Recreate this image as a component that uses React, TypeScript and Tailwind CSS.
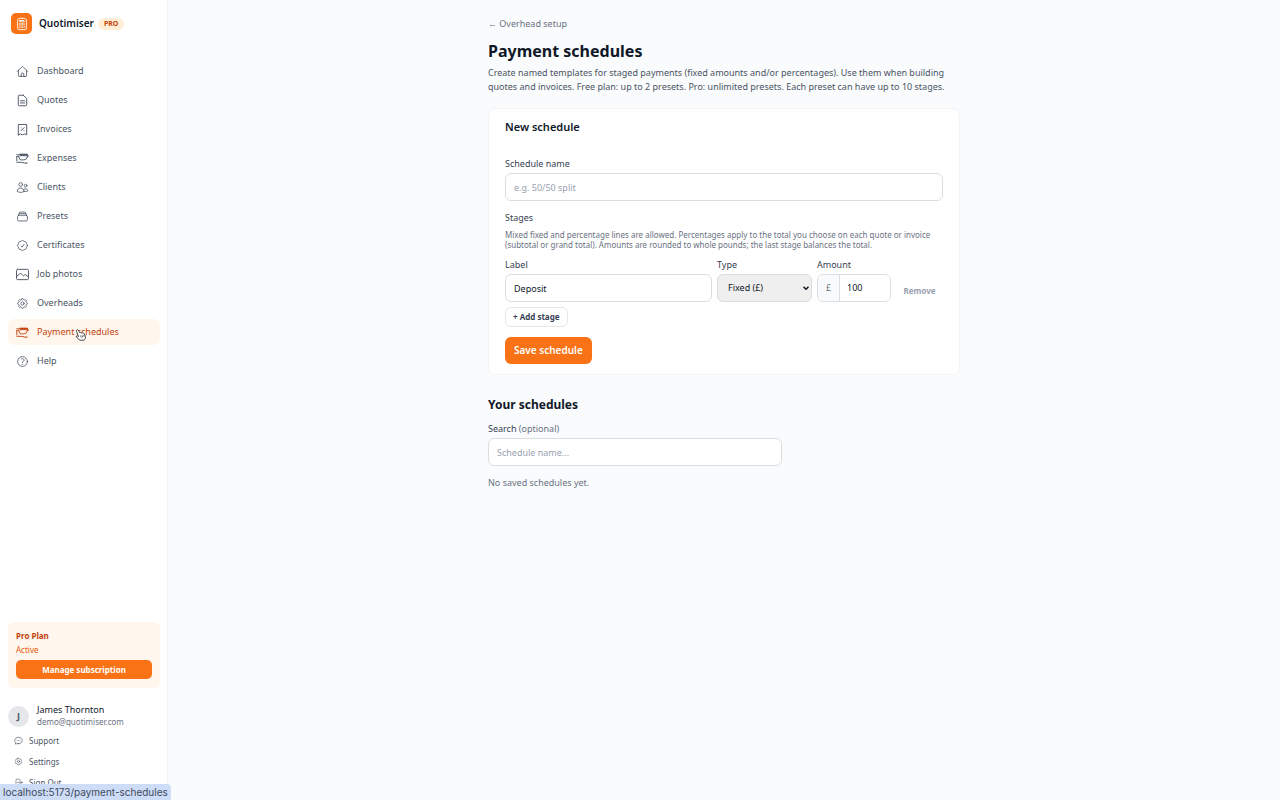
import { useState } from "react";
import type { ReactNode } from "react";
import clsx from "clsx";
import {
  HiOutlineArrowRightOnRectangle,
  HiOutlineCalculator,
  HiOutlineCheckBadge,
  HiOutlineCog6Tooth,
  HiOutlineCog8Tooth,
  HiOutlineHome,
  HiOutlineQuestionMarkCircle,
  HiOutlineRectangleStack,
  HiOutlineUsers,
} from "react-icons/hi2";

function Svg({ children }: { children: ReactNode }) {
  return (
    <svg
      viewBox="0 0 24 24"
      fill="none"
      stroke="currentColor"
      strokeWidth={1.75}
      strokeLinecap="round"
      strokeLinejoin="round"
      className="size-full"
      aria-hidden="true"
    >
      {children}
    </svg>
  );
}

function DocumentIcon() {
  return (
    <Svg>
      <path d="M13.5 2.25H6A1.75 1.75 0 0 0 4.25 4v16c0 .97.78 1.75 1.75 1.75h12A1.75 1.75 0 0 0 19.75 20V8.5l-6.25-6.25ZM8.25 12.5h7.5M8.25 16.5h7.5" />
    </Svg>
  );
}

function ReceiptIcon() {
  return (
    <Svg>
      <path d="M4.25 21.75v-19h15.5v19l-3.9-1.5-3.85 1.5-3.85-1.5-3.9 1.5ZM9 14.5l6-6" />
      <path d="M9.25 9h.01M14.75 14h.01" />
    </Svg>
  );
}

function WalletIcon() {
  return (
    <Svg>
      <path d="M1.5 5c2.500.5 4-.5 6-1h13.500l1 3.500" />
      <path d="M8.500 5H20.500" strokeWidth={3} />
      <path d="M1.500 8.250c7-2 13-2 20.500-.75M1.500 8.250v8" />
      <path d="m5 9 2.500 5.250c4 .75 8 .5 11.500-1.250L22 7.500" />
      <path d="M1.500 19c6-.25 11.500.25 18.500 2.250v-1.500" />
    </Svg>
  );
}

function PhotoIcon() {
  return (
    <Svg>
      <rect x="1" y="2.5" width="22" height="19" rx="2" />
      <path d="m1.5 15.750 5-5a2.250 2.250 0 0 1 3.100 0l3.900 3.700 1.750-1.500a2.250 2.250 0 0 1 3.100 0l4.150 3.300" />
    </Svg>
  );
}

function ChatIcon() {
  return (
    <Svg>
      <path d="M12 20.500c5.500 0 10-3.800 10-8.500s-4.500-8.500-10-8.500S2 7.300 2 12c0 2.400 1.100 4.500 3 6.100l-1.500 3.400c2 0 3.500-.7 4.800-1.600 1.200.4 2.400.6 3.700.6ZM8 12h.01M12 12h.01M16 12h.01" />
    </Svg>
  );
}

const navItems = [
  { label: "Dashboard", icon: <HiOutlineHome className="size-full" /> },
  { label: "Quotes", icon: <DocumentIcon /> },
  { label: "Invoices", icon: <ReceiptIcon /> },
  { label: "Expenses", icon: <WalletIcon /> },
  { label: "Clients", icon: <HiOutlineUsers className="size-full" /> },
  { label: "Presets", icon: <HiOutlineRectangleStack className="size-full" /> },
  { label: "Certificates", icon: <HiOutlineCheckBadge className="size-full" /> },
  { label: "Job photos", icon: <PhotoIcon /> },
  { label: "Overheads", icon: <HiOutlineCog8Tooth className="size-full" /> },
  { label: "Payment schedules", icon: <WalletIcon />, active: true },
  { label: "Help", icon: <HiOutlineQuestionMarkCircle className="size-full" /> },
];

const accountItems = [
  { label: "Support", icon: <ChatIcon /> },
  { label: "Settings", icon: <HiOutlineCog6Tooth className="size-full" /> },
  { label: "Sign Out", icon: <HiOutlineArrowRightOnRectangle className="size-full" /> },
];

function HandCursor() {
  return (
    <svg
      viewBox="0 0 16 16"
      className="absolute top-[10px] left-[67px] size-3"
      fill="white"
      stroke="#333"
      strokeWidth={1.2}
      strokeLinejoin="round"
      aria-hidden="true"
    >
      <path d="M2.400 1.200c.7-.5 1.600-.3 2 .4L6.600 5.200c.5-.6 1.500-.6 2 .1.600-.5 1.600-.4 2 .4.700-.4 1.600-.1 1.900.7l1.300 3.400c.5 1.500.1 3-1 4.100l-.6 1H6.500L2.300 11.300c-.7-.6-.8-1.500-.3-2 .5-.4 1.200-.3 1.800.2l.9.6L2 3c-.3-.7-.2-1.400.4-1.800Z" />
      <path d="m7.300 8.600 1 3M9.400 8.300l1 3M11.400 8l.8 2.500" strokeWidth={0.9} />
    </svg>
  );
}

function Sidebar() {
  return (
    <aside className="flex w-[168px] shrink-0 flex-col border-r border-gray-100 bg-white">
      <div className="flex items-center gap-[7px] px-[11px] pt-[13px]">
        <span className="flex size-[21px] items-center justify-center rounded-[5px] bg-[#f97316] text-white">
          <HiOutlineCalculator className="size-3.5" />
        </span>
        <span className="text-[10px] font-semibold text-gray-900">Quotimiser</span>
        <span className="-ml-[3px] rounded-full bg-[#ffedd5] px-[6px] text-[7px] leading-3 font-bold text-[#c2410c]">
          PRO
        </span>
      </div>

      <nav className="mt-6 flex flex-1 flex-col gap-[3px] pr-[7px] pl-2" aria-label="Main">
        {navItems.map((item) => (
          <a
            key={item.label}
            href="#"
            className={clsx(
              "relative flex h-[26px] items-center gap-2 rounded-md px-2",
              item.active ? "bg-[#fff7ed] text-[#c2410c]" : "text-gray-600",
            )}
          >
            <span className="size-[13px]">{item.icon}</span>
            {item.label}
            {item.active && <HandCursor />}
          </a>
        ))}
      </nav>

      <section className="mr-[7px] ml-2 rounded-md bg-[#fff7ed] px-2 pt-2 pb-[9px]">
        <h2 className="text-[8px] leading-3 font-bold text-[#c2410c]">Pro Plan</h2>
        <p className="mt-[2px] text-[8px] leading-3 text-[#ea580c]">Active</p>
        <button
          type="button"
          className="mt-1 block h-[19px] w-full rounded-[5px] bg-[#f97316] text-[8px] font-bold text-white"
        >
          Manage subscription
        </button>
      </section>

      <div className="flex items-center gap-2 px-2 pt-4 pb-[2px]">
        <span className="flex size-[21px] items-center justify-center rounded-full bg-gray-200 text-[9px] font-bold text-gray-600">
          J
        </span>
        <div>
          <p className="leading-3 text-gray-900">James Thornton</p>
          <p className="text-[8px] leading-3 text-gray-500">demo@quotimiser.com</p>
        </div>
      </div>
      <ul className="px-[14px] pb-[7px]">
        {accountItems.map((item) => (
          <li key={item.label}>
            <a href="#" className="flex h-[21px] items-center gap-[6px] text-[8px] text-gray-600">
              <span className="size-[9px]">{item.icon}</span>
              {item.label}
            </a>
          </li>
        ))}
      </ul>
    </aside>
  );
}

const field =
  "h-7 w-full rounded-md border border-[#dadde2] bg-white px-2 text-gray-900 placeholder:text-gray-400";
const label = "block leading-4 text-gray-700";

function NewSchedule() {
  const [name, setName] = useState("");
  const [stage, setStage] = useState("Deposit");
  const [type, setType] = useState("fixed");
  const [amount, setAmount] = useState("100");

  return (
    <section className="mt-[14px] rounded-lg border border-gray-100 bg-white px-4 py-[10px]">
      <h2 className="text-[11px] leading-4 font-semibold text-gray-900">New schedule</h2>
      <form className="mt-[21px]" onSubmit={(e) => e.preventDefault()}>
        <label htmlFor="schedule-name" className={label}>
          Schedule name
        </label>
        <input
          id="schedule-name"
          className={clsx(field, "mt-[1px]")}
          placeholder="e.g. 50/50 split"
          value={name}
          onChange={(e) => setName(e.target.value)}
        />

        <h3 className="mt-[9px] leading-4 text-gray-700">Stages</h3>
        <p className="mt-1 text-[8px] leading-[10px] text-gray-500">
          Mixed fixed and percentage lines are allowed. Percentages apply to the total you choose on each quote or
          invoice (subtotal or grand total). Amounts are rounded to whole pounds; the last stage balances the total.
        </p>

        <div className="mt-[7px] flex items-end gap-[5px]">
          <div className="flex-1">
            <label htmlFor="stage-label" className={label}>
              Label
            </label>
            <input
              id="stage-label"
              className={clsx(field, "mt-[1px]")}
              value={stage}
              onChange={(e) => setStage(e.target.value)}
            />
          </div>
          <div className="w-[95px]">
            <label htmlFor="stage-type" className={label}>
              Type
            </label>
            <div className="relative mt-[1px]">
              <select
                id="stage-type"
                className="block h-7 w-full appearance-none rounded-md border border-[#dadde2] bg-[#efefef] px-[10px] text-gray-900"
                value={type}
                onChange={(e) => setType(e.target.value)}
              >
                <option value="fixed">Fixed (£)</option>
                <option value="percent">Percent (%)</option>
              </select>
              <svg
                viewBox="0 0 12 8"
                className="pointer-events-none absolute top-3 right-[3px] h-1 w-[6px] text-gray-900"
                fill="none"
                stroke="currentColor"
                strokeWidth={3}
                aria-hidden="true"
              >
                <path d="m1 1.500 5 5 5-5" />
              </svg>
            </div>
          </div>
          <div className="w-[74px]">
            <label htmlFor="stage-amount" className={label}>
              Amount
            </label>
            <div className="mt-[1px] flex h-7 overflow-hidden rounded-md border border-[#dadde2]">
              <span className="flex w-[22px] shrink-0 items-center justify-center border-r border-[#dadde2] bg-gray-50 text-gray-500">
                £
              </span>
              <input
                id="stage-amount"
                className="w-full min-w-0 bg-white px-[7px] text-gray-900"
                value={amount}
                onChange={(e) => setAmount(e.target.value)}
              />
            </div>
          </div>
          <button
            type="button"
            disabled
            className="mb-[3px] w-[47px] text-center text-[8px] leading-4 font-bold text-gray-400"
          >
            Remove
          </button>
        </div>

        <button
          type="button"
          className="mt-[5px] block h-5 rounded-md border border-gray-200 bg-white px-[7px] text-[8px] font-bold text-gray-700"
        >
          + Add stage
        </button>
        <button
          type="submit"
          className="mt-[10px] block h-[27px] rounded-md bg-[#f97316] px-[9px] text-[10px] font-semibold text-white"
        >
          Save schedule
        </button>
      </form>
    </section>
  );
}

export default function App() {
  const [query, setQuery] = useState("");

  return (
    <div className="h-screen overflow-hidden bg-[#f9fbfc] font-['Noto_Sans',sans-serif] text-[9px]">
      <div className="flex h-full">
        <Sidebar />
        <main className="min-w-0 flex-1 overflow-y-auto pt-4">
          <div className="mx-auto w-full max-w-[472px]">
            <a href="#" className="block leading-4 text-gray-500">
              ← Overhead setup
            </a>
            <h1 className="mt-2 text-[16px] leading-[22px] font-bold text-gray-900">Payment schedules</h1>
            <p className="mt-1 leading-[14px] text-gray-600">
              Create named templates for staged payments (fixed amounts and/or percentages). Use them when building
              quotes and invoices. Free plan: up to 2 presets. Pro: unlimited presets. Each preset can have up to 10
              stages.
            </p>

            <NewSchedule />

            <h2 className="mt-[22px] text-[12px] leading-4 font-bold text-gray-900">Your schedules</h2>
            <label htmlFor="schedule-search" className="mt-2 block leading-4 text-gray-700">
              Search <span className="text-gray-500">(optional)</span>
            </label>
            <div className="mt-[1px] max-w-[294px]">
              <input
                id="schedule-search"
                className={field}
                placeholder="Schedule name..."
                value={query}
                onChange={(e) => setQuery(e.target.value)}
              />
            </div>
            <p className="mt-[9px] leading-4 text-gray-500">No saved schedules yet.</p>
          </div>
        </main>
      </div>

      <div className="fixed bottom-0 left-0 h-4 rounded-tr-sm bg-[#cddcf7] px-[3px] font-['Inter',sans-serif] text-[10px] leading-4 text-[#3f4a5c]">
        localhost:5173/payment-schedules
      </div>
    </div>
  );
}
